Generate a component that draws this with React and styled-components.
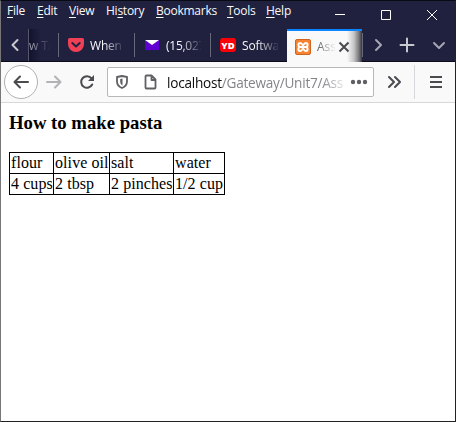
import React from 'react';
import styled, { createGlobalStyle } from 'styled-components';

const Global = createGlobalStyle`
  * { box-sizing: border-box; }
  html, body { margin: 0; padding: 0; overflow: hidden; background: #fff; }
`;

const Window = styled.div`
  width: 456px;
  height: 422px;
  display: flex;
  flex-direction: column;
  overflow: hidden;
  background: #fff;
  border: 1px solid #222;
  border-left-color: #777;
  border-top-color: #080a14;
  font-family: "Open Sans", "Noto Sans", sans-serif;
  svg { display: block; flex: none; }
`;

const TitleBar = styled.header`
  display: flex;
  justify-content: space-between;
  flex: none;
  height: 28px;
  background: #20213f;
`;

const Menu = styled.nav`
  display: flex;
  padding-left: 6px;
`;

const MenuItem = styled.span`
  flex: none;
  width: ${(p) => p.$w}px;
  height: 20px;
  font-size: 12px;
  line-height: 20px;
  letter-spacing: ${(p) => p.$ls || 0}px;
  white-space: nowrap;
  color: #f9f9fa;
  u { text-underline-offset: 2px; text-decoration-thickness: 1px; text-decoration-skip-ink: none; }
`;

const Controls = styled.div`
  display: flex;
  svg { width: 46px; height: 28px; }
`;

const TabStrip = styled.div`
  display: flex;
  flex: none;
  height: 33px;
  background: #20213f;
  border-bottom: 1px solid #0c0c1b;
`;

const StripButton = styled.div`
  display: flex;
  flex: none;
  align-items: center;
  justify-content: center;
  width: ${(p) => p.$w}px;
  height: 32px;
`;

const Tab = styled.div`
  display: flex;
  flex: none;
  align-items: center;
  width: ${(p) => p.$w}px;
  height: 32px;
  padding-left: ${(p) => p.$pad ?? 9}px;
`;

const PartialTab = styled(Tab)`
  border-left: 1px solid #55566d;
  background: linear-gradient(90deg, #12132a, #20213f 12px);
`;

const ActiveTab = styled(Tab)`
  height: 33px;
  border-top: 2px solid #0a84ff;
  background: linear-gradient(90deg, #f9f9fa 60px, #c4c4c6 67px, #77777b 72px, #35353c 75px);
`;

const Divider = styled.i`
  flex: none;
  align-self: center;
  width: 1px;
  height: 24px;
  background: #67687a;
`;

const TabLabel = styled.span`
  flex: none;
  width: ${(p) => p.$w}px;
  margin-left: ${(p) => p.$gap ?? 6}px;
  overflow: hidden;
  white-space: nowrap;
  font-size: 12px;
  line-height: 20px;
  padding-top: 1px;
  letter-spacing: ${(p) => p.$ls || 0}px;
  color: ${(p) => p.$color || '#f9f9fa'};
  mask-image: linear-gradient(90deg, #000 ${(p) => p.$solid ?? 40}%, transparent 105%);
`;

const Toolbar = styled.div`
  display: flex;
  flex: none;
  align-items: center;
  height: 41px;
  padding-left: 3px;
  background: #f9f9fa;
  border-bottom: 1px solid #d8d8da;
`;

const BackButton = styled.div`
  display: flex;
  flex: none;
  align-items: center;
  justify-content: center;
  width: 34px;
  height: 34px;
  border: 1px solid #b1b1b1;
  border-radius: 50%;
  background: #fff;
`;

const ToolIcon = styled.div`
  display: flex;
  flex: none;
  align-items: center;
  justify-content: center;
  width: ${(p) => p.$w}px;
  height: 32px;
`;

const AddressBar = styled.div`
  display: flex;
  flex: none;
  align-items: center;
  width: 267px;
  height: 30px;
  margin-left: 3px;
  padding-left: 7px;
  border: 1px solid #b8b8b9;
  border-radius: 2px;
  background: #fff;
`;

const PageIconSlot = styled.span`
  flex: none;
  margin-left: 15px;
`;

const Url = styled.span`
  flex: none;
  width: 183px;
  margin-left: 10px;
  overflow: hidden;
  white-space: nowrap;
  font-size: 13.6px;
  line-height: 22px;
  padding-top: 1px;
  letter-spacing: -0.24px;
  color: #85858a;
  mask-image: linear-gradient(90deg, #000 84%, transparent);
  b { font-weight: 400; color: #0c0c0d; }
`;

const ToolDivider = styled.i`
  flex: none;
  width: 1px;
  height: 34px;
  margin-right: 13px;
  background: #d7d7db;
`;

const Page = styled.main`
  flex: 1;
  padding: 9px 8px 0;
  color: #000;
  font-family: "Liberation Serif", serif;
`;

const Title = styled.h3`
  margin: 0 0 19px;
  font-size: 18.72px;
  line-height: 21px;
`;

const Table = styled.table`
  table-layout: fixed;
  width: 215px;
  border-collapse: collapse;
  font-size: 16px;
  line-height: 18px;
  letter-spacing: 0.08px;
`;

const Cell = styled.td`
  width: ${(p) => p.$w}px;
  height: 21px;
  padding: 1px;
  border: 1px solid #000;
  white-space: nowrap;
`;

const menuItems = [
  ['', 'F', 'ile', 30], ['', 'E', 'dit', 32], ['', 'V', 'iew', 37], ['Hi', 's', 'tory', 50],
  ['', 'B', 'ookmarks', 71], ['', 'T', 'ools', 39], ['', 'H', 'elp', 30],
];
const widths = [44, 56, 64, 51];
const rows = [
  ['flour', 'olive oil', 'salt', 'water'],
  ['4 cups', '2 tbsp', '2 pinches', '1/2 cup'],
];

const Stroke = ({ w = 16, h = 16, d, color = '#4a4a4f', width = 2, round = true }) => (
  <svg width={w} height={h} viewBox={`0 0 ${w} ${h}`} fill="none" stroke={color} strokeWidth={width}
    strokeLinecap={round ? 'round' : 'butt'} strokeLinejoin={round ? 'round' : 'miter'}>
    <path d={d} />
  </svg>
);

const PocketIcon = () => (
  <svg width="16" height="16" viewBox="0 0 16 16">
    <path d="M1.5 1h13Q16 1 16 2.5V7a8 8 0 0 1-16 0V2.5Q0 1 1.5 1Z" fill="#ef4056" />
    <path d="m4.3 6 3.7 3.5L11.7 6" fill="none" stroke="#20213f" strokeWidth="2" strokeLinecap="round" strokeLinejoin="round" />
  </svg>
);

const MailIcon = () => (
  <svg width="16" height="16" viewBox="0 0 16 16">
    <path d="M1 3h14v10H1Z" fill="#6001d2" />
    <path d="M1 3h14L8 8Z" fill="#fff" />
  </svg>
);

const YdIcon = () => (
  <svg width="16" height="16" viewBox="0 0 16 16">
    <rect width="16" height="14" y="1" rx="3" fill="#fb0007" />
    <text x="8" y="11.500" textAnchor="middle" fontFamily="Open Sans, sans-serif" fontSize="9.5" fontWeight="800" fill="#fff">YD</text>
  </svg>
);

const XamppIcon = () => (
  <svg width="16" height="16" viewBox="0 0 16 16">
    <rect x=".5" y=".5" width="15" height="15" rx="1.5" fill="#f5832f" stroke="#cf6420" />
    <path d="M5.500 8H10.500M5 8C2.500 7 3 4 5 4S7 6 8 6s1-2 3-2 2.500 3 0 4c2.500 1 2 4 0 4s-2-2-3-2-1 2-3 2-2.500-3 0-4Z"
      fill="none" stroke="#fff" strokeWidth="2" strokeLinejoin="round" />
  </svg>
);

const ReloadIcon = () => (
  <svg width="16" height="16" viewBox="0 0 16 16">
    <path d="M13.200 10.500A5.800 5.800 0 1 1 12.500 4.300" fill="none" stroke="#4a4a4f" strokeWidth="2" strokeLinecap="round" />
    <path d="M15 1v6H9Z" fill="#4a4a4f" />
  </svg>
);

const ShieldIcon = () => (
  <svg width="14" height="16" viewBox="0 0 14 16">
    <path d="M7 2 12 3v4.500c0 3.500-2 5.300-5 6.500-3-1.200-5-3-5-6.500V3Z" fill="none" stroke="#606064" strokeWidth="1.800" strokeLinejoin="round" />
    <path d="M7.500 4.500v7C6 10.500 5.200 9.500 5.200 7.500V5Z" fill="#606064" />
  </svg>
);

export default function App() {
  return (
    <>
      <Global />
      <Window>
        <TitleBar>
          <Menu>
            {menuItems.map(([before, key, after, w]) => (
              <MenuItem key={key + after} $w={w} $ls={-0.25}>{before}<u>{key}</u>{after}</MenuItem>
            ))}
          </Menu>
          <Controls>
            <Stroke w={46} h={28} d="M18 13.500h10" color="#fff" width={1} round={false} />
            <Stroke w={46} h={28} d="M18.500 9.500h9v9h-9Z" color="#fff" width={1} round={false} />
            <Stroke w={46} h={28} d="m18 9 10 10M28 9 18 19" color="#fff" width={1} round={false} />
          </Controls>
        </TitleBar>
        <TabStrip>
          <StripButton $w={27}><Stroke d="m10.500 3-5 5 5 5" color="#c8c8cf" /></StripButton>
          <PartialTab $w={30} $pad={0}>
            <TabLabel $w={21} $gap={0} $color="#9a9aaa" $solid={10}>w Ta</TabLabel>
          </PartialTab>
          <Divider />
          <Tab $w={75}><PocketIcon /><TabLabel $w={33} $ls={-0.2}>When</TabLabel></Tab>
          <Divider />
          <Tab $w={75}><MailIcon /><TabLabel $w={35} $ls={-0.25}>(15,027</TabLabel></Tab>
          <Divider />
          <Tab $w={76}><YdIcon /><TabLabel $w={36} $ls={-0.2}>Softwa</TabLabel></Tab>
          <ActiveTab $w={75} $pad={8}>
            <XamppIcon />
            <TabLabel $w={18} $color="#606064" $solid={5}>Ass</TabLabel>
            <ToolIcon $w={18}><Stroke d="m3.500 3.500 9 9m0-9-9 9" round={false} /></ToolIcon>
          </ActiveTab>
          <Divider />
          <StripButton $w={29}><Stroke d="m6 3 5 5-5 5" color="#a5a6b3" /></StripButton>
          <StripButton $w={30}><Stroke d="M8 1.500v13M1.500 8h13" color="#c8c8cf" /></StripButton>
          <StripButton $w={34}><Stroke d="m3 6 5 5 5-5" color="#a5a6b3" /></StripButton>
        </TabStrip>
        <Toolbar>
          <BackButton><Stroke d="M15 8H2M7 2.500 1.500 8 7 13.500" /></BackButton>
          <ToolIcon $w={32}><Stroke d="M1 8h13M9 2.500 14.500 8 9 13.500" color="#b3b3b6" /></ToolIcon>
          <ToolIcon $w={34}><ReloadIcon /></ToolIcon>
          <AddressBar>
            <ShieldIcon />
            <PageIconSlot>
              <Stroke w={13} d="M2.500 1.500h5l4 4v8q0 1-1 1h-8q-1 0-1-1v-11q0-1 1-1ZM7.500 2v4h4" color="#606064" width={1.8} />
            </PageIconSlot>
            <Url><b>localhost</b>/Gateway/Unit7/Ass</Url>
            <svg width="18" height="16" viewBox="0 0 18 16" fill="#606064">
              <circle cx="3" cy="8" r="2.200" /><circle cx="9" cy="8" r="2.200" /><circle cx="15" cy="8" r="2.200" />
            </svg>
          </AddressBar>
          <ToolIcon $w={40}><Stroke d="m3 3 5 5-5 5m6-10 5 5-5 5" /></ToolIcon>
          <ToolDivider />
          <Stroke d="M2 3h12M2 8h12M2 13h12" round={false} />
        </Toolbar>
        <Page>
          <Title>How to make pasta</Title>
          <Table>
            <tbody>
              {rows.map((row) => (
                <tr key={row[0]}>
                  {row.map((text, i) => <Cell key={text} $w={widths[i]}>{text}</Cell>)}
                </tr>
              ))}
            </tbody>
          </Table>
        </Page>
      </Window>
    </>
  );
}
